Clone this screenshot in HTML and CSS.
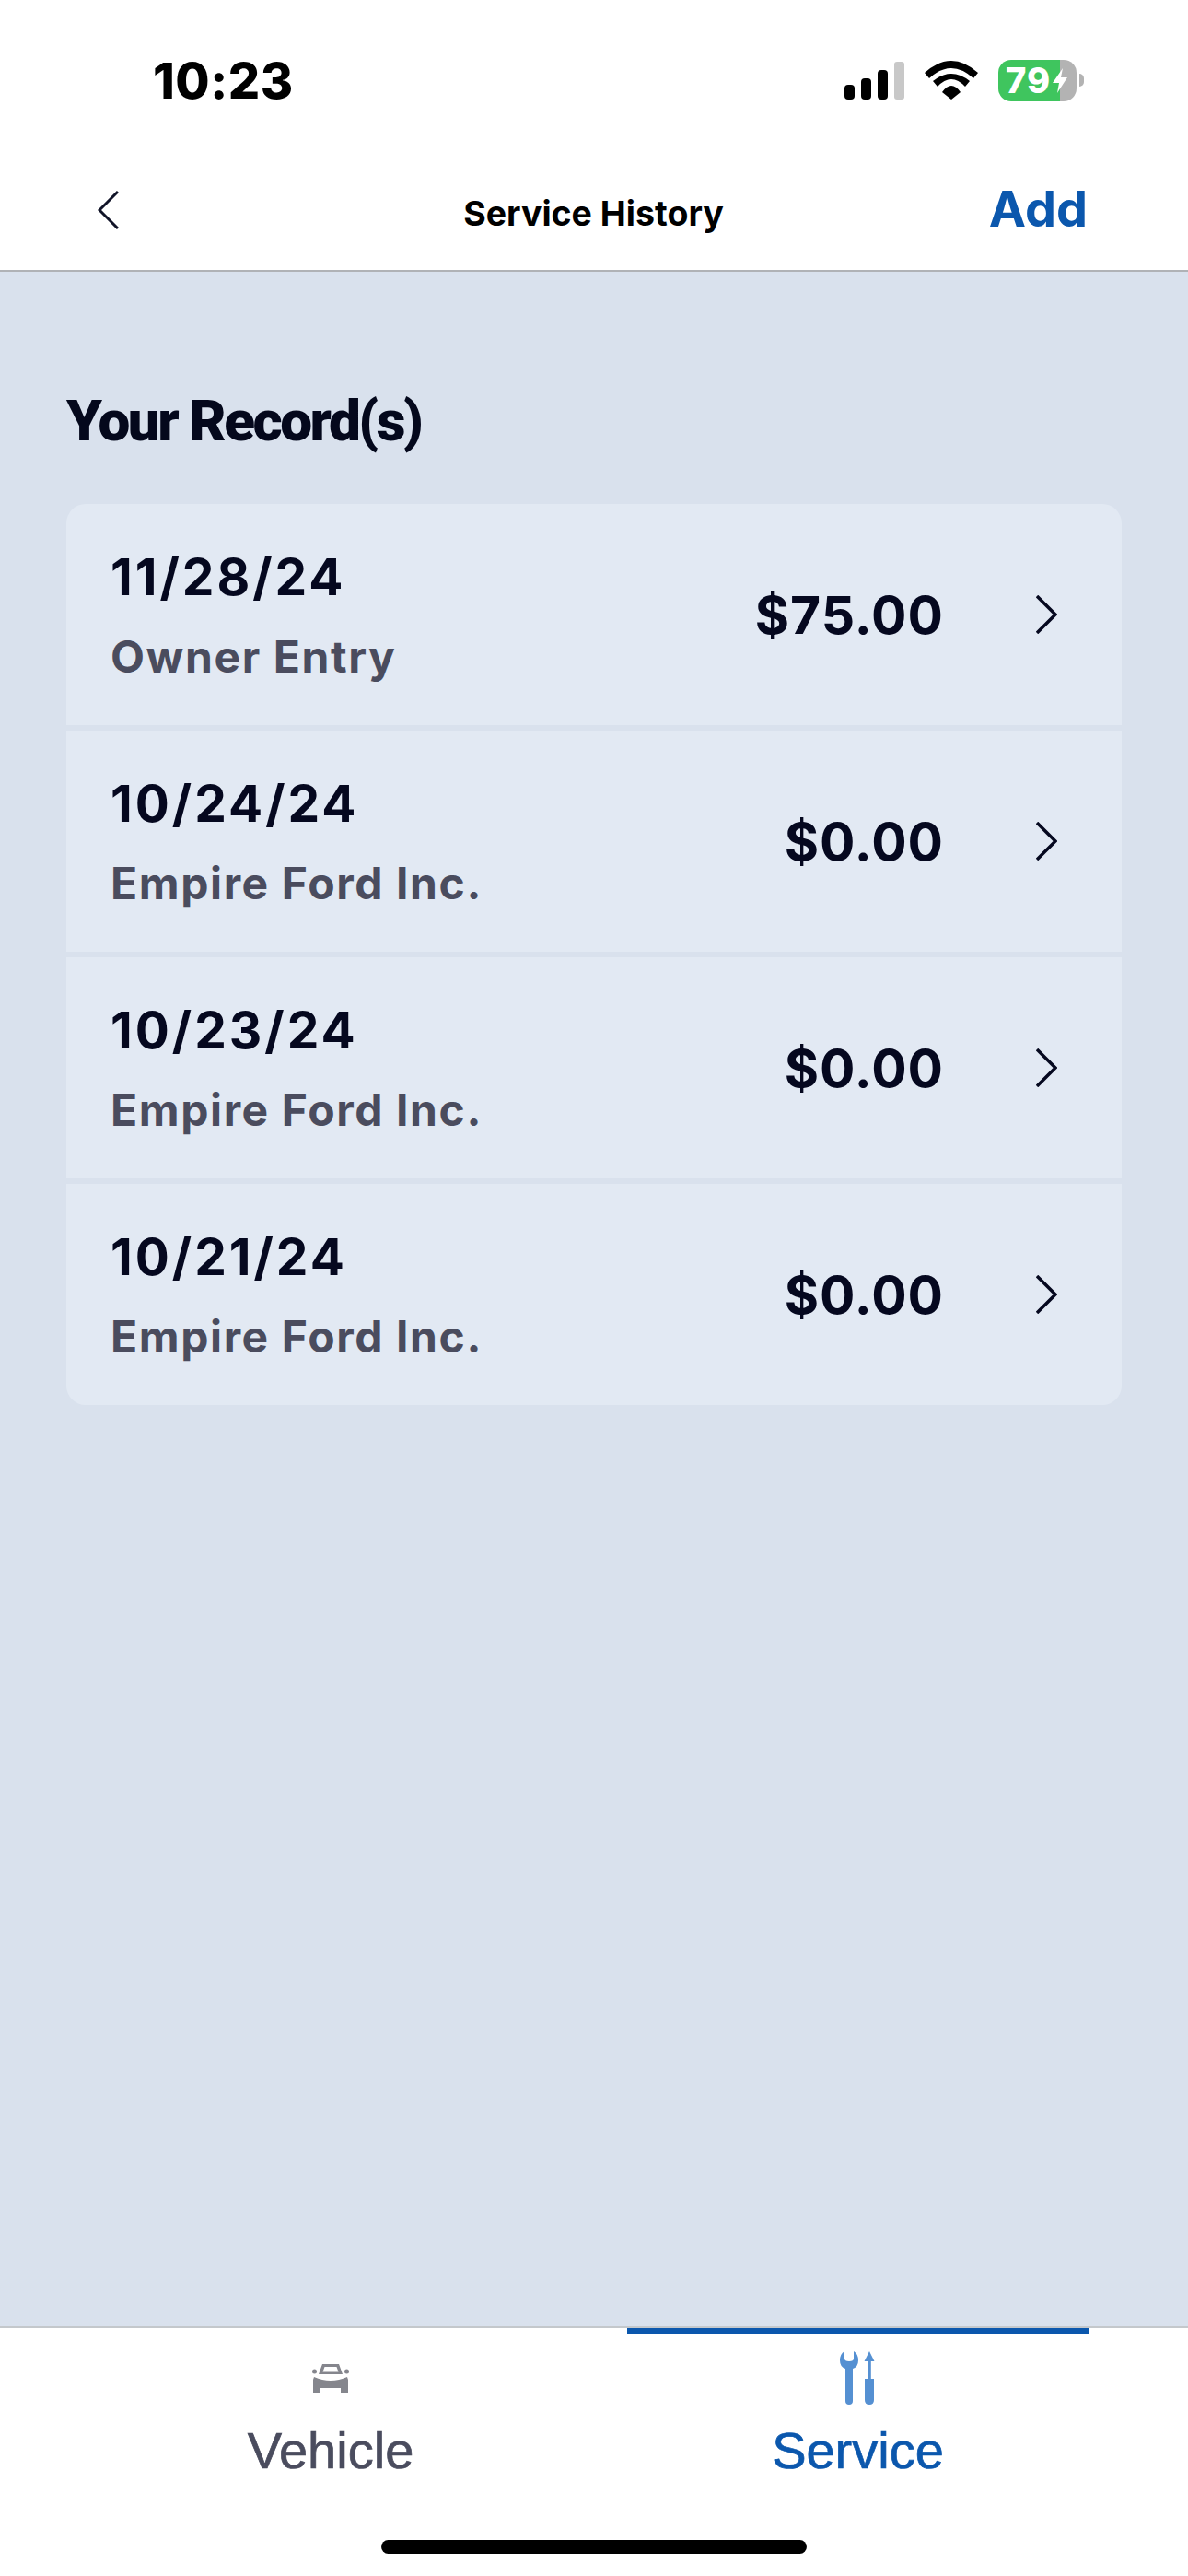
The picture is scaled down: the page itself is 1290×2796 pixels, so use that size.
FILE: index.html
```html
<!DOCTYPE html>
<html lang="en">
<head>
    <meta charset="UTF-8">
    <meta name="viewport" content="width=device-width, initial-scale=1.0">
    <title>Service History</title>
    <link rel="stylesheet" href="styles.css">
</head>
<body>
    <div class="app">
        <div class="status-bar">
            <span class="time">10:23</span>
            <div class="status-icons">
                <svg width="65" height="41" viewBox="0 0 65 41">
                    <rect x="0" y="25" width="11" height="16" rx="4" fill="#000"/>
                    <rect x="18" y="18" width="11" height="23" rx="4" fill="#000"/>
                    <rect x="36" y="9" width="11" height="32" rx="4" fill="#000"/>
                    <rect x="54" y="0" width="11" height="41" rx="3" fill="#c8c8c8"/>
                </svg>
                <svg width="58" height="42" viewBox="0 0 58 42" fill="#000">
                    <path d="M0 13 Q29 -13 58 13 L53 19 Q29 -3 5 19 Z"/>
                    <path d="M9 22 Q29 6 49 22 L44 28 Q29 12 14 28 Z"/>
                    <path d="M19 34 Q29 20 39 34 L29 42 Z"/>
                </svg>
                <div class="battery">
                    <div class="battery-body">
                        <span class="battery-text">79</span>
                        <svg width="18" height="27" viewBox="0 0 18 27"><path d="M12 0 L1 16 H8 L6 27 L17 10 H10 Z" fill="#fff"/></svg>
                    </div>
                    <div class="battery-nub"></div>
                </div>
            </div>
        </div>

        <div class="header">
            <button class="back">
                <svg width="23" height="42" viewBox="0 0 23 42" fill="none" stroke="#111428" stroke-width="3"><path d="M22 1 L2 21 L22 41"/></svg>
            </button>
            <h1 class="title">Service History</h1>
            <span class="add">Add</span>
        </div>

        <div class="content">
            <h2 class="records-title">Your Record(s)</h2>
            <div class="records">
                <div class="record">
                    <div class="record-info"><div class="record-date">11/28/24</div><div class="record-source">Owner Entry</div></div>
                    <div class="record-price">$75.00</div>
                    <svg class="chevron" width="23" height="42" viewBox="0 0 23 42" fill="none" stroke="#05081f" stroke-width="3.5"><path d="M1 1 L21 21 L1 41"/></svg>
                </div>
                <div class="record">
                    <div class="record-info"><div class="record-date">10/24/24</div><div class="record-source">Empire Ford Inc.</div></div>
                    <div class="record-price">$0.00</div>
                    <svg class="chevron" width="23" height="42" viewBox="0 0 23 42" fill="none" stroke="#05081f" stroke-width="3.5"><path d="M1 1 L21 21 L1 41"/></svg>
                </div>
                <div class="record">
                    <div class="record-info"><div class="record-date">10/23/24</div><div class="record-source">Empire Ford Inc.</div></div>
                    <div class="record-price">$0.00</div>
                    <svg class="chevron" width="23" height="42" viewBox="0 0 23 42" fill="none" stroke="#05081f" stroke-width="3.5"><path d="M1 1 L21 21 L1 41"/></svg>
                </div>
                <div class="record">
                    <div class="record-info"><div class="record-date">10/21/24</div><div class="record-source">Empire Ford Inc.</div></div>
                    <div class="record-price">$0.00</div>
                    <svg class="chevron" width="23" height="42" viewBox="0 0 23 42" fill="none" stroke="#05081f" stroke-width="3.5"><path d="M1 1 L21 21 L1 41"/></svg>
                </div>
            </div>
        </div>

        <div class="tabs">
            <div class="tab">
                <div class="tab-icon">
                    <svg width="40" height="31" viewBox="0 0 40 31" fill="#85868d">
                        <path fill-rule="evenodd" d="M11 0 H29 L33 11 H7 Z M13.5 3 L11.5 8.5 H28.5 L26.5 3 Z"/>
                        <circle cx="2.5" cy="8" r="2.5"/>
                        <circle cx="37.5" cy="8" r="2.5"/>
                        <path d="M2 14 Q20 22 38 14 L39 17 V31 H31 V26 H9 V31 H1 V17 Z"/>
                    </svg>
                </div>
                <span class="tab-label">Vehicle</span>
            </div>
            <div class="tab tab-active">
                <div class="tab-icon">
                    <svg width="42" height="58" viewBox="0 0 42 58" fill="#5590d2">
                        <path d="M6 0 V8 Q6 11 11 11 Q16 11 16 8 V0 Q21 3 21 10 Q21 17 15 19 V54 Q15 58 11 58 Q7 58 7 54 V19 Q1 17 1 10 Q1 3 6 0 Z"/>
                        <path d="M33 0 L38.5 11 H34.8 V30 H38 V53 Q38 58 33 58 Q28 58 28 53 V30 H31.2 V11 H27.5 Z"/>
                    </svg>
                </div>
                <span class="tab-label">Service</span>
            </div>
        </div>
        <div class="home-area"><div class="home-bar"></div></div>
    </div>
</body>
</html>
```

FILE: styles.css
```css
* {
    margin: 0;
    padding: 0;
    box-sizing: border-box;
}

body {
    font-family: "Inter", sans-serif;
    background-color: #d9e1ed;
}

.app {
    width: 1290px;
    height: 2796px;
    display: flex;
    flex-direction: column;
    overflow: hidden;
}

.status-bar {
    height: 170px;
    flex-shrink: 0;
    background-color: #fff;
    display: flex;
    align-items: center;
    justify-content: space-between;
    padding: 4px 113px 0 166px;
}

.time {
    font-size: 54px;
    font-weight: 800;
    letter-spacing: 0.5px;
    color: #000;
}

.status-icons {
    display: flex;
    align-items: center;
    gap: 22px;
}

.battery {
    display: flex;
    align-items: center;
    gap: 3px;
}

.battery-body {
    width: 85px;
    height: 45px;
    border-radius: 14px;
    background: linear-gradient(to right, #3fc55e 79%, #b3b3b3 79%);
    display: flex;
    align-items: center;
    gap: 1px;
    padding-left: 8px;
}

.battery-text {
    font-size: 38px;
    line-height: 45px;
    font-weight: 800;
    letter-spacing: 1px;
    color: #fff;
}

.battery-nub {
    width: 5px;
    height: 14px;
    border-radius: 0 5px 5px 0;
    background-color: #b3b3b3;
}

.header {
    height: 125px;
    flex-shrink: 0;
    background-color: #fff;
    border-bottom: 2px solid #b0b2b6;
    display: grid;
    grid-template-columns: 1fr auto 1fr;
    align-items: center;
    padding: 0 109px 7px 106px;
}

.back {
    background: none;
    border: none;
    display: flex;
}

.title {
    font-size: 37.5px;
    font-weight: 700;
    color: #000;
    padding: 6px 0 0 2px;
}

.add {
    font-size: 54px;
    font-weight: 700;
    color: #0b57ad;
    justify-self: end;
    padding-bottom: 4px;
}

.content {
    flex: 1;
    padding: 125px 72px 0;
}

.records-title {
    font-family: "Roboto", sans-serif;
    font-size: 62px;
    font-weight: 900;
    letter-spacing: -2.5px;
    color: #04081c;
    margin-bottom: 54px;
}

.records {
    display: flex;
    flex-direction: column;
    gap: 6px;
    border-radius: 21px;
    overflow: hidden;
}

.record {
    height: 240px;
    background-color: #e2e9f3;
    display: flex;
    align-items: center;
    padding: 0 70px 0 48px;
}

.record-info {
    flex: 1;
}

.record-date {
    font-size: 55px;
    font-weight: 700;
    letter-spacing: 3px;
    color: #05081f;
    margin-bottom: 24px;
}

.record-source {
    font-size: 48px;
    font-weight: 700;
    letter-spacing: 1.6px;
    color: #4a4c5e;
}

.record-price {
    font-size: 57px;
    font-weight: 700;
    letter-spacing: 1px;
    color: #05081f;
    margin-right: 100px;
}

.tabs {
    height: 175px;
    flex-shrink: 0;
    background-color: #fff;
    border-top: 2px solid #c4c8cc;
    display: grid;
    grid-template-columns: 644px 501px;
    padding-left: 37px;
}

.tab {
    display: flex;
    flex-direction: column;
    align-items: center;
    gap: 19px;
    padding-top: 18px;
    border-top: 6px solid transparent;
    color: #4a4c5e;
}

.tab-active {
    color: #0b57ad;
    border-top-color: #0b57ad;
}

.tab-icon {
    height: 60px;
    display: flex;
    align-items: center;
}

.tab-label {
    font-family: "Liberation Sans", sans-serif;
    font-size: 56px;
    line-height: 60px;
    -webkit-text-stroke: 0.7px currentColor;
}

.home-area {
    height: 96px;
    flex-shrink: 0;
    background-color: #fff;
    display: flex;
    justify-content: center;
    padding-top: 57px;
}

.home-bar {
    width: 462px;
    height: 15px;
    border-radius: 8px;
    background-color: #000;
}
```
